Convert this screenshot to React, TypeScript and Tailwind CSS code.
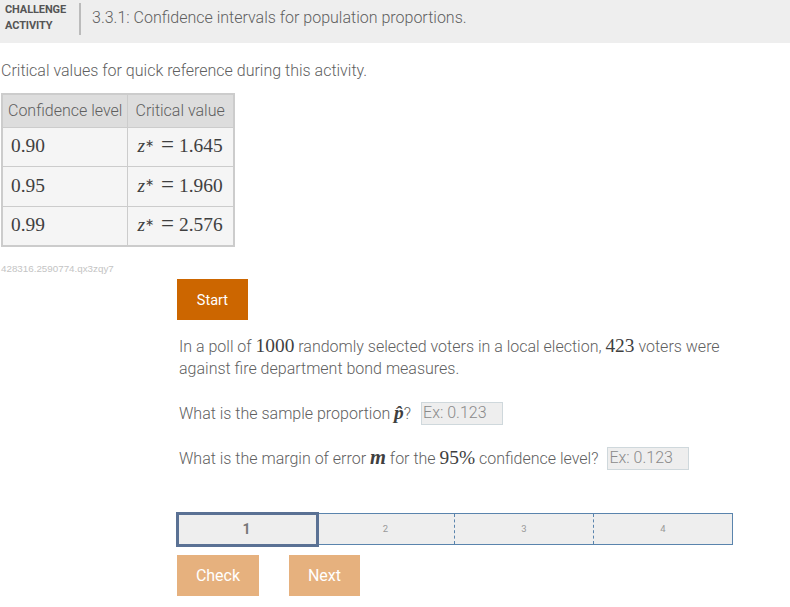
import React from 'react';

const Tex = ({ children, className = '' }: { children: React.ReactNode; className?: string }) => (
  <span className={`font-['Liberation_Serif',serif] text-[19.4px] text-[#3f3f3f] ${className}`}>{children}</span>
);

const rows = [
  { level: '0.90', value: '1.645' },
  { level: '0.95', value: '1.960' },
  { level: '0.99', value: '2.576' },
];

const AnswerInput = ({ width }: { width: string }) => (
  <span className={`inline-block h-[23px] ${width} border border-[#cfd8dc] bg-[#eee] pl-[1px] text-[16px] leading-[20px] text-[#8a8a8a]`}>
    Ex: 0.123
  </span>
);

const App = () => {
  return (
    <div className="h-[607px] w-[790px] overflow-hidden bg-white font-['Roboto',sans-serif] font-light text-[16px] text-[#5f5f5f]">
      <div className="flex h-[43px] bg-[#eee]">
        <div className="w-[79px] pl-[5px] pt-[2px] text-[11px] font-bold leading-[15px] tracking-[-0.1px] text-[#555]">
          <div>CHALLENGE</div>
          <div className="mt-[1px]">ACTIVITY</div>
        </div>
        <div className="mt-[3px] h-[32px] w-[2px] bg-[#bbb]" />
        <div className="pl-[11px] pt-[8px] leading-[20px]">3.3.1: Confidence intervals for population proportions.</div>
      </div>

      <p className="mt-[18px] pl-[1px] leading-[20px]">Critical values for quick reference during this activity.</p>

      <table className="ml-[1px] mt-[12px] w-[234px] border-collapse border-2 border-[#ccc]">
        <thead>
          <tr className="h-[33px] bg-[#ddd]">
            <th className="w-[125px] whitespace-nowrap border border-[#ccc] pl-[5px] text-left font-light">Confidence level</th>
            <th className="whitespace-nowrap border border-[#ccc] pl-[8px] text-left font-light">Critical value</th>
          </tr>
        </thead>
        <tbody>
          {rows.map((row) => (
            <tr key={row.level} className="h-[39.7px] bg-[#f5f5f5]">
              <td className="border border-[#ccc] pb-[2px] pl-[8px]"><Tex>{row.level}</Tex></td>
              <td className="whitespace-nowrap border border-[#ccc] pb-[2px] pl-[10px]">
                <Tex>
                  <i>z</i><sup className="text-[11px] leading-none">∗</sup>
                  <span className="ml-[7px] mr-[5px] text-[23px] leading-none">=</span>{row.value}
                </Tex>
              </td>
            </tr>
          ))}
        </tbody>
      </table>

      <div className="mt-[16px] pl-[1px] font-['Liberation_Sans',sans-serif] text-[9.8px] font-normal leading-[12px] text-[#c4c4c4]">428316.2590774.qx3zqy7</div>

      <div className="ml-[177px] mt-[4px] w-[556px]">
        <button className="h-[41px] w-[71px] bg-[#cc6600] pt-[2px] text-[14.5px] font-normal text-white">Start</button>

        <p className="mt-[15px] pl-[2px] leading-[22px]">
          In a poll of <Tex>1000</Tex> randomly selected voters in a local election, <Tex>423</Tex> voters were against fire department bond measures.
        </p>

        <div className="mt-[21px] flex items-center pl-[2px] leading-[23px]">
          <span>What is the sample proportion <Tex className="font-bold italic">p̂</Tex>?</span>
          <span className="ml-[10px] flex"><AnswerInput width="w-[82px]" /></span>
        </div>

        <div className="mt-[21px] flex items-center pl-[2px] leading-[23px]">
          <span>What is the margin of error <Tex className="text-[20.5px] font-bold italic">m</Tex> for the <Tex>95%</Tex> confidence level?</span>
          <span className="ml-[9px] flex"><AnswerInput width="w-[82px]" /></span>
        </div>

        <div className="relative mt-[43px] flex h-[32px] border border-[#5a84ad] bg-[#eee] text-[9.5px] font-normal text-[#999]">
          <div className="flex w-[141px] items-center justify-center" />
          <div className="flex w-[136px] items-center justify-center border-r border-dashed border-[#5a84ad] pr-[2px]">2</div>
          <div className="flex w-[139px] items-center justify-center border-r border-dashed border-[#5a84ad]">3</div>
          <div className="flex flex-1 items-center justify-center">4</div>
          <div className="absolute -left-[2px] -top-[2px] flex h-[35px] w-[143px] items-center justify-center border-[3px] border-[#5a7194] bg-[#eee] pr-[2px] text-[14px] font-bold text-[#777]">1</div>
        </div>

        <div className="mt-[10px] flex gap-[30px]">
          <button className="h-[41px] w-[82px] bg-[#e6b17e] text-[16px] font-normal text-white">Check</button>
          <button className="h-[41px] w-[71px] bg-[#e6b17e] text-[16px] font-normal text-white">Next</button>
        </div>
      </div>
    </div>
  );
};

export default App;
